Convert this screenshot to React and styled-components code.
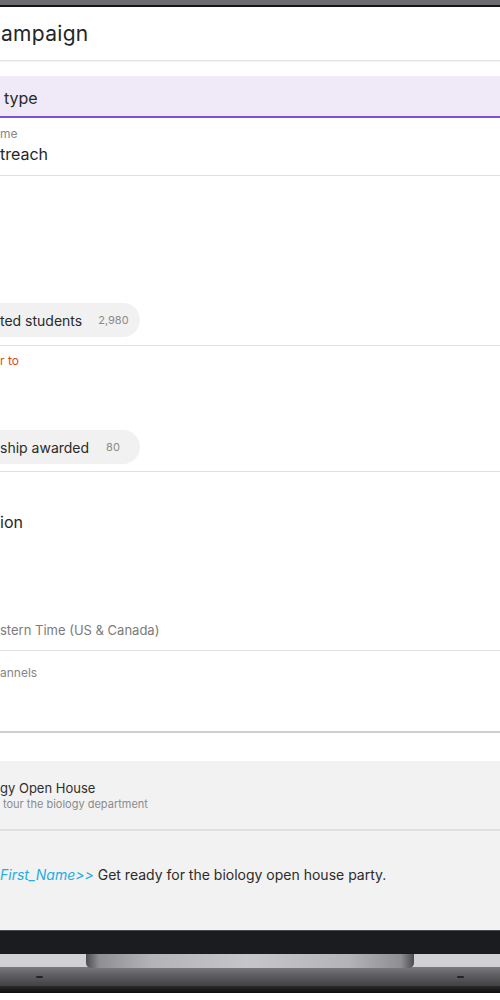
import React from "react";
import styled, { createGlobalStyle } from "styled-components";

const Global = createGlobalStyle`
  html, body { margin: 0; padding: 0; background: #ffffff; }
  body { font-family: Inter, "Open Sans", sans-serif; color: #262626; }
  * { box-sizing: border-box; }
`;

const Device = styled.div`
  width: 500px;
  height: 1000px;
  display: flex;
  flex-direction: column;
  overflow: hidden;
`;

const TopBezel = styled.div`
  height: 7px;
  background: #6c6c70;
  border-bottom: 2px solid #141416;
`;

const Screen = styled.div`
  background: #ffffff;
  display: flex;
  flex-direction: column;
  overflow: hidden;
`;

const Header = styled.div`
  height: 54px;
  display: flex;
  align-items: center;
  padding-left: 1px;
  font-size: 21px;
  letter-spacing: 0.3px;
  color: #262626;
  border-bottom: 1px solid #e2e2e2;
  box-shadow: 0 1px 2px rgba(0, 0, 0, 0.06);
`;

const SelectBar = styled.div`
  margin-top: 15px;
  height: 42px;
  background: #efe9f8;
  border-bottom: 2px solid #7b52cf;
  display: flex;
  align-items: center;
  padding: 4px 0 0 4px;
  font-size: 16px;
  color: #2a2a2a;
`;

const Field = styled.div`
  display: flex;
  flex-direction: column;
  align-items: flex-start;
  padding: ${(p) => p.$pt}px 0 ${(p) => p.$pb}px 0;
  border-bottom: ${(p) => (p.$strong ? "2px solid #cfcfcf" : "1px solid #e0e0e0")};
  box-shadow: ${(p) => (p.$strong ? "0 1px 2px rgba(0,0,0,0.08)" : "none")};
`;

const Label = styled.div`
  font-size: 12px;
  line-height: 16px;
  color: ${(p) => (p.$error ? "#e0471d" : "#858585")};
`;

const Value = styled.div`
  font-size: 16px;
  line-height: 22px;
  color: #262626;
  margin-top: ${(p) => p.$mt || 0}px;
`;

const Hint = styled.div`
  font-size: 13px;
  line-height: 18px;
  color: #7b7b7b;
  margin-top: ${(p) => p.$mt || 0}px;
`;

const Chip = styled.div`
  margin-left: -24px;
  margin-top: ${(p) => p.$mt || 0}px;
  width: 164px;
  height: 34px;
  padding-left: 24px;
  border-radius: 17px;
  background: #f1f1f1;
  display: flex;
  align-items: center;
`;

const ChipText = styled.span`
  font-size: 14px;
  color: #2a2a2a;
`;

const ChipCount = styled.span`
  font-size: 11px;
  color: #8a8a8a;
  margin-left: ${(p) => p.$gap}px;
`;

const Gap = styled.div`
  height: 28px;
  background: #ffffff;
`;

const Panel = styled.div`
  background: #f2f2f2;
  padding: ${(p) => p.$pt}px 0 ${(p) => p.$pb}px ${(p) => p.$pl || 0}px;
  border-bottom: ${(p) => (p.$divider ? "2px solid #e0e0e0" : "none")};
`;

const ItemTitle = styled.div`
  font-size: 13px;
  line-height: 18px;
  color: #2e2e2e;
`;

const ItemSub = styled.div`
  font-size: 11px;
  line-height: 14px;
  color: #8a8a8a;
  padding-left: 3px;
`;

const Message = styled.div`
  font-size: 14px;
  line-height: 20px;
  color: #2b2b2b;
  white-space: nowrap;
`;

const Token = styled.span`
  font-style: italic;
  color: #22aee0;
`;

const BottomBezel = styled.div`
  height: 24px;
  background: #1b1c1f;
  border-top: 1px solid #4a4a4e;
`;

const HingeRow = styled.div`
  height: 13px;
  background: #d1d1d5;
  display: flex;
  justify-content: center;
  position: relative;
  z-index: 1;
`;

const Notch = styled.div`
  width: 328px;
  height: 14px;
  border-radius: 0 0 5px 5px;
  background: linear-gradient(
    to right,
    #4c4c50 0%,
    #8e8e93 4%,
    #b4b4b8 20%,
    #c6c6ca 50%,
    #b4b4b8 80%,
    #8e8e93 96%,
    #4c4c50 100%
  );
`;

const Base = styled.div`
  height: 19px;
  background: linear-gradient(to bottom, #7a7a7e 0%, #5e5e62 45%, #414144 100%);
  display: flex;
  justify-content: space-between;
  align-items: center;
  padding: 0 36px;
`;

const Foot = styled.span`
  width: 7px;
  height: 2px;
  border-radius: 1px;
  background: #242426;
`;

const BaseEdge = styled.div`
  height: 7px;
  background: linear-gradient(to bottom, #2a2a2c, #0e0e0f);
`;

export default function App() {
  return (
    <>
      <Global />
      <Device>
        <TopBezel />
        <Screen>
          <Header>ampaign</Header>
          <SelectBar>type</SelectBar>

          <Field $pt={8} $pb={10}>
            <Label>me</Label>
            <Value $mt={1}>treach</Value>
          </Field>

          <Field $pt={127} $pb={8}>
            <Chip>
              <ChipText>ted students</ChipText>
              <ChipCount $gap={16}>2,980</ChipCount>
            </Chip>
          </Field>

          <Field $pt={7} $pb={7}>
            <Label $error>r to</Label>
            <Chip $mt={61}>
              <ChipText>ship awarded</ChipText>
              <ChipCount $gap={17}>80</ChipCount>
            </Chip>
          </Field>

          <Field $pt={39} $pb={11}>
            <Value>ion</Value>
            <Hint $mt={88}>stern Time (US &amp; Canada)</Hint>
          </Field>

          <Field $pt={14} $pb={50} $strong>
            <Label>annels</Label>
          </Field>

          <Gap />

          <Panel $pt={18} $pb={18} $divider>
            <ItemTitle>gy Open House</ItemTitle>
            <ItemSub>tour the biology department</ItemSub>
          </Panel>

          <Panel $pt={34} $pb={45}>
            <Message>
              <Token>First_Name&gt;&gt;</Token> Get ready for the biology open house party.
            </Message>
          </Panel>
        </Screen>
        <BottomBezel />
        <HingeRow>
          <Notch />
        </HingeRow>
        <Base>
          <Foot />
          <Foot />
        </Base>
        <BaseEdge />
      </Device>
    </>
  );
}
